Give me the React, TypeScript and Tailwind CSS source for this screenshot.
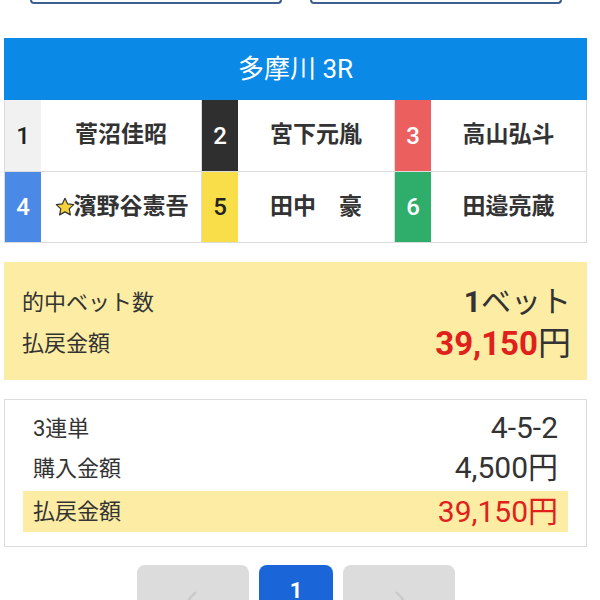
const font = { fontFamily: 'Roboto, "Noto Sans CJK JP", sans-serif' };

type Racer = { no: number; name: string; star?: boolean };

const racers: Racer[] = [
  { no: 1, name: '菅沼佳昭' },
  { no: 2, name: '宮下元胤' },
  { no: 3, name: '高山弘斗' },
  { no: 4, name: '濱野谷憲吾', star: true },
  { no: 5, name: '田中　豪' },
  { no: 6, name: '田邉亮蔵' },
];

const numCls: Record<number, string> = {
  1: 'bg-[#f1f1f1] text-[#222]',
  2: 'bg-[#2f2f2f] text-white',
  3: 'bg-[#ec5f5f] text-white',
  4: 'bg-[#4a8ae6] text-white',
  5: 'bg-[#f8df4a] text-[#222]',
  6: 'bg-[#2fae6b] text-white',
};

function Star() {
  return (
    <svg width="22" height="22" viewBox="0 0 24 24" className="shrink-0 -mr-[2px]">
      <path
        d="M12 2.5l2.9 6.1 6.6.8-4.9 4.6 1.3 6.6L12 17.3l-5.9 3.3 1.3-6.6-4.9-4.6 6.6-.8z"
        fill="#f6d23a"
        stroke="#333"
        strokeWidth="1.3"
        strokeLinejoin="round"
      />
    </svg>
  );
}

function Cell({ r }: { r: Racer }) {
  return (
    <div className="flex h-full border-l border-[#dcdcdc] first:border-l-0">
      <div className={`w-[36px] shrink-0 flex items-center justify-center text-[24px] font-medium ${numCls[r.no]}`}>
        {r.no}
      </div>
      <div className="flex-1 flex items-center justify-center text-[23px] font-bold text-[#333]">
        {r.star && <Star />}
        <span>{r.name}</span>
      </div>
    </div>
  );
}

function Chevron({ left }: { left?: boolean }) {
  return (
    <svg width="20" height="20" viewBox="0 0 20 20" className="mt-[24px]">
      <path
        d={left ? 'M13 3 L6 10 L13 17' : 'M7 3 L14 10 L7 17'}
        fill="none"
        stroke="#c8c8c8"
        strokeWidth="2"
      />
    </svg>
  );
}

export default function App() {
  return (
    <div className="w-[600px] h-[600px] overflow-hidden bg-white" style={font}>
      <div className="flex gap-[28px] pl-[30px]">
        <div className="w-[252px] h-[4px] border-x-2 border-b-2 border-[#3f5f8f] rounded-b-[8px]" />
        <div className="w-[252px] h-[4px] border-x-2 border-b-2 border-[#3f5f8f] rounded-b-[8px]" />
      </div>

      <div className="ml-[4px] w-[583px] mt-[34px]">
        <div className="h-[62px] bg-[#0a8ae6] flex items-center justify-center text-white text-[26px]">
          多摩川 3R
        </div>
        <div className="border-x border-b border-[#dcdcdc]">
          <div className="grid grid-cols-[196px_193px_1fr] h-[72px] border-b border-[#dcdcdc]">
            {racers.slice(0, 3).map((r) => (
              <Cell key={r.no} r={r} />
            ))}
          </div>
          <div className="grid grid-cols-[196px_193px_1fr] h-[70px]">
            {racers.slice(3).map((r) => (
              <Cell key={r.no} r={r} />
            ))}
          </div>
        </div>

        <div className="mt-[19px] h-[118px] bg-[#fdeda4] pl-[18px] pr-[16px] pt-[20px] text-[#333]">
          <div className="flex items-center justify-between h-[40px]">
            <span className="text-[22px]">的中ベット数</span>
            <span className="text-[30px] leading-none">
              <span className="font-bold">1</span>ベット
            </span>
          </div>
          <div className="flex items-center justify-between h-[42px]">
            <span className="text-[22px]">払戻金額</span>
            <span className="text-[33px] leading-none">
              <span className="font-bold text-[#e0201a]">39,150</span>円
            </span>
          </div>
        </div>

        <div className="mt-[19px] h-[148px] border border-[#dcdcdc] px-[18px] pt-[8px] text-[#333]">
          <div className="flex items-center justify-between h-[40px] px-[10px]">
            <span className="text-[22px]">3連単</span>
            <span className="text-[30px] leading-none">4-5-2</span>
          </div>
          <div className="flex items-center justify-between h-[40px] px-[10px]">
            <span className="text-[22px]">購入金額</span>
            <span className="text-[30px] leading-none">4,500円</span>
          </div>
          <div className="flex items-center justify-between h-[41px] mt-[3px] px-[10px] bg-[#fdeda4]">
            <span className="text-[22px]">払戻金額</span>
            <span className="text-[30px] leading-none text-[#e0201a]">39,150円</span>
          </div>
        </div>
      </div>

      <div className="mt-[18px] flex justify-center gap-[10px] pr-[8px]">
        <div className="w-[112px] h-[50px] rounded-[8px] bg-[#dcdcdc] flex justify-center">
          <Chevron left />
        </div>
        <div className="w-[74px] h-[50px] rounded-[8px] bg-[#1a66d9] flex items-center justify-center text-white text-[22px] font-bold">
          1
        </div>
        <div className="w-[112px] h-[50px] rounded-[8px] bg-[#dcdcdc] flex justify-center">
          <Chevron />
        </div>
      </div>
    </div>
  );
}
